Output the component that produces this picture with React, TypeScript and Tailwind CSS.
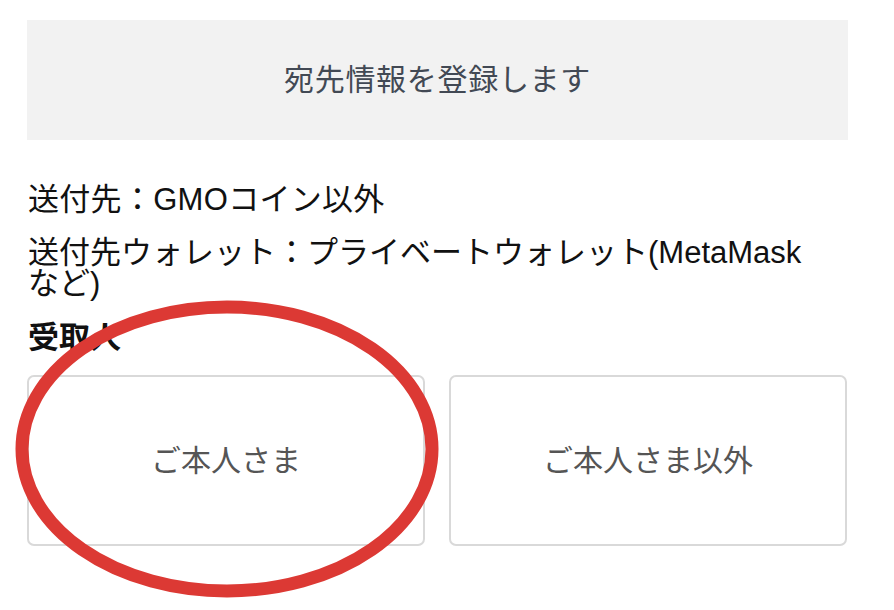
import React from "react";

const font = {
  fontFamily:
    '"Liberation Sans", "Noto Sans CJK JP", "Noto Sans", sans-serif',
};

export default function App() {
  return (
    <div
      className="relative w-[894px] h-[610px] bg-white overflow-hidden"
      style={font}
    >
      <div className="pt-[20px] pl-[27px] pr-[46px] flex flex-col">
        <div className="h-[120px] bg-[#f2f2f2] flex items-center justify-center text-[30px] leading-none text-[#424954] tracking-[0.7px]">
          宛先情報を登録します
        </div>
        <div className="mt-[44px] pl-[1px] text-[31px] leading-[31px] text-[#111111] tracking-[0.3px]">
          送付先：GMOコイン以外
        </div>
        <div className="mt-[22px] pl-[1px] text-[31px] leading-[31px] text-[#111111]">
          送付先ウォレット：プライベートウォレット(MetaMask
          <span className="whitespace-nowrap">など)</span>
        </div>
        <div className="mt-[23px] pl-[1px] text-[31px] leading-[31px] font-bold text-[#111111]">
          受取人
        </div>
        <div className="mt-[22px] grid grid-cols-2 gap-[24px] pr-[1px]">
          <button className="h-[171px] rounded-[7px] border-2 border-[#d9d9d9] bg-white flex items-center justify-center text-[30px] text-[#555555]">
            ご本人さま
          </button>
          <button className="h-[171px] rounded-[7px] border-2 border-[#d9d9d9] bg-white flex items-center justify-center text-[30px] text-[#555555]">
            ご本人さま以外
          </button>
        </div>
      </div>
      <svg
        className="absolute inset-0 pointer-events-none"
        width="894"
        height="610"
        viewBox="0 0 894 610"
      >
        <ellipse
          cx="227"
          cy="449"
          rx="205"
          ry="142"
          fill="none"
          stroke="#dc3934"
          strokeWidth="13"
        />
      </svg>
    </div>
  );
}
